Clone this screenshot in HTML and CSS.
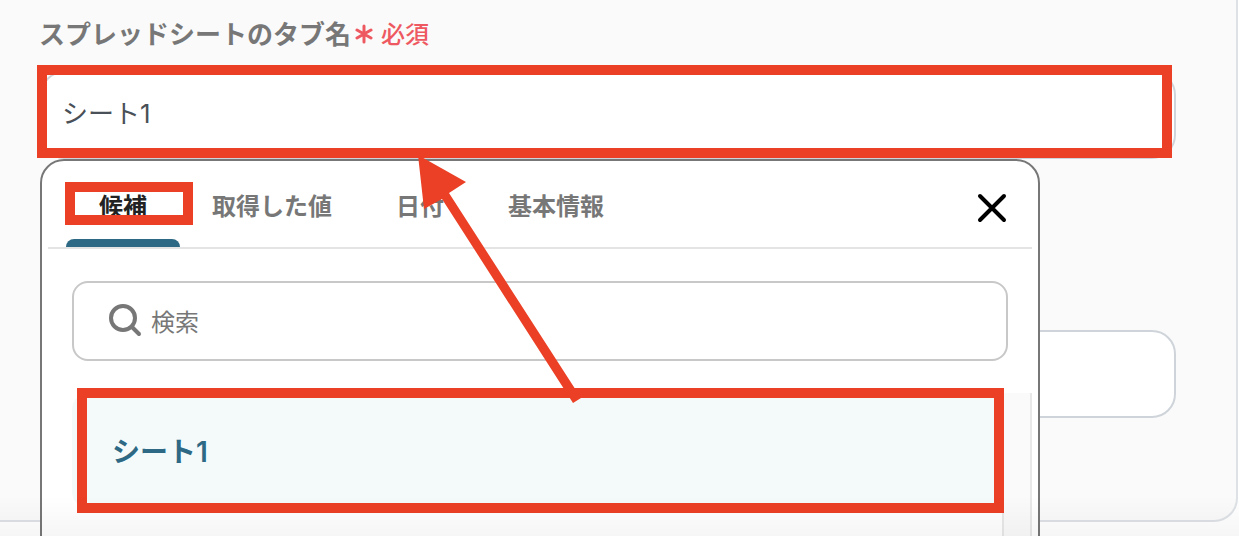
FILE: index.html
```html
<!DOCTYPE html>
<html lang="ja">
<head>
<meta charset="utf-8">
<title>スプレッドシートのタブ名</title>
<link rel="stylesheet" href="styles.css">
</head>
<body>
<main class="card">
  <div class="label-row">
    <label class="label" for="tab-name">スプレッドシートのタブ名</label>
    <span class="required">
      <svg class="asterisk" viewBox="0 0 18 24" aria-hidden="true"><path d="M9 6V22M2 10L16 18M16 10L2 18"/></svg>
      必須
    </span>
  </div>
  <div class="field">
    <input class="text-input" id="tab-name" type="text" value="シート1">
    <div class="mark mark-field"></div>
    <section class="popup">
      <div class="tabs">
        <button class="tab tab-active" type="button">候補</button>
        <button class="tab" type="button">取得した値</button>
        <button class="tab" type="button">日付</button>
        <button class="tab" type="button">基本情報</button>
        <button class="close" type="button" aria-label="閉じる">
          <svg class="close-icon" viewBox="0 0 30 30" aria-hidden="true"><path d="M3 3L27 27M27 3L3 27"/></svg>
        </button>
        <div class="mark mark-tab"></div>
      </div>
      <div class="search">
        <svg class="search-icon" viewBox="0 0 34 34" aria-hidden="true"><circle cx="14" cy="14" r="12"/><path d="M23 23L30 30"/></svg>
        <input class="search-input" type="search" placeholder="検索" aria-label="検索">
      </div>
      <div class="results">
        <div class="list">
          <button class="option" type="button">シート1</button>
          <div class="mark mark-option"></div>
        </div>
        <div class="track"></div>
      </div>
      <svg class="arrow" viewBox="0 0 164 250" aria-hidden="true"><path d="M0 0L48 27L31 38L163 243L155 248L24 44L6 54Z"/></svg>
    </section>
  </div>
  <div class="field">
    <input class="text-input" type="text" aria-label="値">
  </div>
</main>
<div class="fade"></div>
</body>
</html>
```
FILE: styles.css
```css
* {
  box-sizing: border-box;
}

body {
  margin: 0;
  height: 100vh;
  overflow: hidden;
  background: #fff;
  font-family: Inter, "Noto Sans CJK JP", sans-serif;
  color: #777;
}

button,
input {
  margin: 0;
  font: inherit;
  color: inherit;
}

button {
  padding: 0;
  border: 0;
  background: none;
}

.card {
  display: flex;
  flex-direction: column;
  margin-right: 1px;
  padding: 12px 60px 102px 39px;
  border: 2px solid #dee2e6;
  border-width: 0 2px 2px 0;
  border-radius: 0 0 24px 0;
  background: #fafafa;
}

.label-row {
  display: flex;
  align-items: center;
  gap: 4px;
  height: 40px;
  margin-bottom: 19px;
}

.label {
  font-size: 26px;
  font-weight: 600;
}

.required {
  display: flex;
  align-items: center;
  gap: 8px;
  font-size: 24px;
  font-weight: 500;
  color: #ee5860;
}

.asterisk {
  width: 18px;
  height: 24px;
  fill: none;
  stroke: currentColor;
  stroke-width: 3;
  stroke-linecap: round;
}

.field {
  position: relative;
  margin-left: 1px;
}

.field + .field {
  margin-top: 171px;
}

.text-input {
  display: block;
  width: 100%;
  height: 88px;
  padding: 0 20px 8px;
  border: 2px solid #ced4da;
  border-radius: 24px;
  outline: 0;
  background: #fff;
  font-size: 26px;
  color: #495057;
}

.mark {
  position: absolute;
  z-index: 3;
  border: 10px solid #eb4026;
  pointer-events: none;
}

.mark-field {
  inset: -6px 4px 1px -3px;
}

.mark-tab {
  top: 21px;
  left: 17px;
  width: 128px;
  height: 43px;
}

.mark-option {
  inset: -5px -2px -5px 5px;
}

.popup {
  position: absolute;
  z-index: 2;
  top: 100%;
  left: 0;
  right: 136px;
  height: 480px;
  border: 2px solid #777;
  border-radius: 24px;
  background: #fff;
}

.tabs {
  position: relative;
  display: flex;
  height: 88px;
  margin: 0 6px;
  padding-left: 18px;
  border-bottom: 2px solid #e4e4e4;
}

.tab {
  position: relative;
  padding: 0 32px;
  font-size: 24px;
  font-weight: 600;
}

.tab-active {
  width: 114px;
  color: #222;
}

.tab-active::after {
  content: "";
  position: absolute;
  inset: auto 0 0;
  height: 8px;
  border-radius: 8px 8px 0 0;
  background: #2d6884;
}

.close {
  display: flex;
  align-items: center;
  margin-left: auto;
  margin-right: 25px;
  padding-top: 8px;
  color: #000;
}

.close-icon {
  width: 30px;
  height: 30px;
  fill: none;
  stroke: currentColor;
  stroke-width: 4;
  stroke-linecap: round;
}

.search {
  display: flex;
  align-items: center;
  gap: 8px;
  height: 80px;
  margin: 32px 30px;
  padding: 0 35px;
  border: 2px solid #c8c8c8;
  border-radius: 16px;
}

.search-icon {
  flex: none;
  width: 34px;
  height: 34px;
  fill: none;
  stroke: #777;
  stroke-width: 4;
  stroke-linecap: round;
}

.search-input {
  flex: 1;
  min-width: 0;
  padding: 2px 0 0;
  border: 0;
  outline: 0;
  background: none;
  font-size: 24px;
}

.search-input::placeholder {
  color: #777;
  opacity: 1;
}

.results {
  display: flex;
  height: 240px;
  margin: 0 6px 0 30px;
}

.list {
  position: relative;
  flex: 1;
  align-self: flex-start;
}

.option {
  display: block;
  width: 100%;
  height: 115px;
  padding: 0 40px 2px;
  border-radius: 16px;
  background: #f4fafa;
  font-size: 28px;
  font-weight: 600;
  text-align: left;
  color: #2d6884;
}

.track {
  width: 30px;
  border: 2px solid #e8e8e8;
  border-width: 0 2px;
  background: #fafafa;
}

.arrow {
  position: absolute;
  z-index: 4;
  top: -6px;
  left: 376px;
  width: 164px;
  height: 250px;
  fill: #eb4026;
  pointer-events: none;
}

.fade {
  position: fixed;
  z-index: 2;
  inset: auto 0 0;
  height: 40px;
  background: linear-gradient(transparent, rgba(0, 0, 0, 0.035));
  pointer-events: none;
}
```
